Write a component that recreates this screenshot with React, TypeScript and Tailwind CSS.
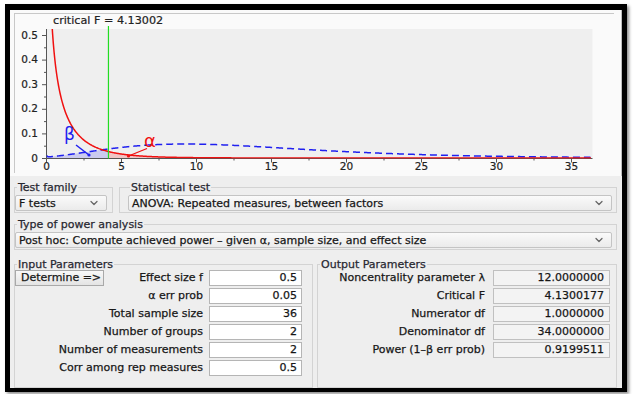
import { ChevronDown } from "lucide-react";
import type { ReactNode } from "react";

// --- density helpers for the chart ---
function lgamma(x: number): number {
  const c = [
    0.99999999999980993, 676.5203681218851, -1259.1392167224028, 771.32342877765313,
    -176.61502916214059, 12.507343278686905, -0.13857109526572012, 9.9843695780195716e-6,
    1.5056327351493116e-7,
  ];
  if (x < 0.5) return Math.log(Math.PI / Math.sin(Math.PI * x)) - lgamma(1 - x);
  x -= 1;
  let a = c[0];
  const t = x + 7.5;
  for (let i = 1; i < 9; i++) a += c[i] / (x + i);
  return 0.5 * Math.log(2 * Math.PI) + (x + 0.5) * Math.log(t) - t + Math.log(a);
}

function fpdf(x: number, d1: number, d2: number) {
  if (x <= 0) return 0;
  const lb = lgamma((d1 + d2) / 2) - lgamma(d1 / 2) - lgamma(d2 / 2);
  return Math.exp(
    lb + (d1 / 2) * Math.log(d1 / d2) + (d1 / 2 - 1) * Math.log(x) - ((d1 + d2) / 2) * Math.log(1 + (d1 * x) / d2)
  );
}

function ncfpdf(x: number, d1: number, d2: number, lam: number) {
  let s = 0;
  for (let k = 0; k < 80; k++) {
    const w = Math.exp(-lam / 2 + k * Math.log(lam / 2) - lgamma(k + 1));
    const dk = d1 + 2 * k;
    s += w * (d1 / dk) * fpdf((d1 * x) / dk, dk, d2);
  }
  return s;
}

const X = (f: number) => 46.5 + f * 15;
const Y = (d: number) => 158 - d * 246;
const CRIT = 4.13002;
const FMAX = 36.3;

function buildPts(fn: (f: number) => number, from: number, to: number, step = 0.05) {
  const pts: string[] = [];
  for (let f = from; f <= to + 1e-9; f += step) {
    pts.push(`${X(f).toFixed(2)},${Y(Math.min(fn(f), 1)).toFixed(2)}`);
  }
  return pts;
}

function Chart() {
  const central = (f: number) => fpdf(f, 1, 34);
  const noncentral = (f: number) => ncfpdf(f, 1, 34, 12);

  const red = buildPts(central, 0.25, FMAX);
  const blue = buildPts(noncentral, 0.01, FMAX);
  const betaFill = buildPts(noncentral, 0.01, CRIT, 0.02);
  const alphaFill = buildPts(central, CRIT, FMAX);

  const yTicks = [0, 0.1, 0.2, 0.3, 0.4, 0.5];
  const yMinor = [0.05, 0.15, 0.25, 0.35, 0.45];
  const xTicks = [0, 5, 10, 15, 20, 25, 30, 35];
  const xMinor = [2.5, 7.5, 12.5, 17.5, 22.5, 27.5, 32.5];

  return (
    <svg width={599} height={159} viewBox="15 14 599 159" className="block">
      <defs>
        <clipPath id="plot">
          <rect x={46.5} y={29} width={546} height={129.5} />
        </clipPath>
      </defs>
      <text x={53} y={23.5} fontSize={11.2} fill="#222" stroke="#222" strokeWidth={0.2}>
        critical F = 4.13002
      </text>
      <rect x={46.5} y={29} width={546} height={129} fill="#efefef" />

      <g clipPath="url(#plot)">
        <polygon points={`${X(0)},${Y(0)} ${betaFill.join(" ")} ${X(CRIT)},${Y(0)}`} fill="rgba(120,120,240,0.3)" />
        <polygon points={`${X(CRIT)},${Y(0)} ${alphaFill.join(" ")} ${X(FMAX)},${Y(0)}`} fill="rgba(240,120,120,0.35)" />
      </g>

      {/* axes */}
      <line x1={46.5} y1={29} x2={46.5} y2={158.5} stroke="#555" />
      <line x1={46.5} y1={158.5} x2={592.5} y2={158.5} stroke="#555" />
      {yTicks.map((t) => (
        <g key={t}>
          <line x1={42} y1={Y(t) + 0.5} x2={46.5} y2={Y(t) + 0.5} stroke="#555" />
          <text x={38} y={Y(t) + 3.5} fontSize={10.5} textAnchor="end" fill="#222" stroke="#222" strokeWidth={0.2}>
            {t === 0 ? "0" : t.toFixed(1)}
          </text>
        </g>
      ))}
      {yMinor.map((t) => (
        <line key={t} x1={44} y1={Y(t) + 0.5} x2={46.5} y2={Y(t) + 0.5} stroke="#555" />
      ))}
      {xTicks.map((t) => (
        <g key={t}>
          <line x1={X(t)} y1={158.5} x2={X(t)} y2={162.5} stroke="#555" />
          <text x={X(t)} y={169.5} fontSize={10.5} textAnchor="middle" fill="#222" stroke="#222" strokeWidth={0.2}>
            {t}
          </text>
        </g>
      ))}
      {xMinor.map((t) => (
        <line key={t} x1={X(t)} y1={158.5} x2={X(t)} y2={160.5} stroke="#555" />
      ))}

      <g clipPath="url(#plot)">
        <polyline points={blue.join(" ")} fill="none" stroke="#2020f0" strokeWidth={1.5} strokeDasharray="7 4" />
        <polyline points={red.join(" ")} fill="none" stroke="#f01010" strokeWidth={1.5} />
      </g>

      <line x1={X(CRIT)} y1={26} x2={X(CRIT)} y2={158.5} stroke="#22dd22" strokeWidth={1.2} />

      {/* beta marker */}
      <text x={64} y={140} fontSize={17} fill="#2020f0">
        β
      </text>
      <line x1={76} y1={145} x2={89} y2={155} stroke="#2020f0" strokeWidth={1.5} />
      <circle cx={89} cy={155} r={1.6} fill="#2020f0" />

      {/* alpha marker */}
      <text x={144} y={147} fontSize={18} fill="#f01010">
        α
      </text>
      <line x1={147} y1={148.5} x2={128.5} y2={156} stroke="#f01010" strokeWidth={1.3} />
      <circle cx={128.5} cy={156} r={1.6} fill="#f01010" />
    </svg>
  );
}

function Combo({ text, className }: { text: string; className?: string }) {
  return (
    <div
      className={`flex items-center justify-between h-[16px] pl-[3px] pr-[6px] border border-[#c4c4c4] rounded-[2px] bg-linear-to-b from-[#fafafa] to-[#ebebeb] text-[11px] text-[#111] ${className ?? ""}`}
    >
      <span className="leading-none whitespace-nowrap">{text}</span>
      <ChevronDown size={12} strokeWidth={2.5} className="text-[#666]" />
    </div>
  );
}

function Group({ title, className, tight, children }: { title: string; className?: string; tight?: boolean; children: ReactNode }) {
  return (
    <fieldset className={`border border-[#d3d3d3] min-w-0 ${className ?? ""}`}>
      <legend className={`ml-[2px] px-[1px] text-[11px] text-[#2a2a3a] ${tight ? "leading-[11px]" : "leading-[13px]"}`}>
        {title}
      </legend>
      {children}
    </fieldset>
  );
}

const inputs: [string, string][] = [
  ["Effect size f", "0.5"],
  ["α err prob", "0.05"],
  ["Total sample size", "36"],
  ["Number of groups", "2"],
  ["Number of measurements", "2"],
  ["Corr among rep measures", "0.5"],
];

const outputs: [string, string][] = [
  ["Noncentrality parameter λ", "12.0000000"],
  ["Critical F", "4.1300177"],
  ["Numerator df", "1.0000000"],
  ["Denominator df", "34.0000000"],
  ["Power (1–β err prob)", "0.9199511"],
];

export default function App() {
  return (
    <div className="w-[633px] h-[394px] bg-white overflow-hidden pt-[4px] pl-[5px] font-['DejaVu_Sans',sans-serif] [-webkit-text-stroke:0.25px_#222]">
      <div className="w-[622px] h-[388px] border-black border-t-[6px] border-l-[5px] border-r-[5px] border-b-[4px] shadow-[2px_2px_3px_rgba(0,0,0,0.45)] bg-[#eeeeee] flex flex-col">
        {/* chart */}
        <div className="h-[166px] bg-[#fafafa] pl-[4px] pt-[3px] border-r border-[#bdbdbd]">
          <div className="w-[600px] h-[160px] border-t border-l border-[#c8c8c8]">
            <Chart />
          </div>
        </div>

        <div className="flex-1 flex flex-col pl-[4px] pr-[5px]">
          <div className="flex gap-[6px] mt-[5px]">
            <Group title="Test family" className="w-[99px] pb-[1px]">
              <Combo text="F tests" className="mt-[1px] w-[92px]" />
            </Group>
            <Group title="Statistical test" className="flex-1 pl-[8px] pr-[4px] pb-[1px]">
              <Combo text="ANOVA: Repeated measures, between factors" className="mt-[1px]" />
            </Group>
          </div>

          <Group title="Type of power analysis" className="mt-[5px] pr-[4px] pb-[1px]">
            <Combo text="Post hoc: Compute achieved power – given α, sample size, and effect size" className="mt-[1px]" />
          </Group>

          <div className="flex-1 flex gap-[4px] mt-[9px]">
            <Group title="Input Parameters" tight className="w-[299px] pr-[10px]">
              <div className="flex flex-col gap-[2px]">
                {inputs.map(([label, value], i) => (
                  <div key={label} className="grid grid-cols-[1fr_93px] gap-x-[6px] h-[16px]">
                    <div className="flex items-center justify-between">
                      {i === 0 ? (
                        <button className="h-[16px] w-[89px] border border-[#a9a9a9] bg-linear-to-b from-[#f8f8f8] to-[#e4e4e4] text-left pl-[5px] text-[11px] leading-[14px] text-[#111]">
                          Determine =&gt;
                        </button>
                      ) : (
                        <span />
                      )}
                      <span className="text-[11px] leading-[16px] text-[#111] whitespace-nowrap">{label}</span>
                    </div>
                    <div className="h-[16px] border border-[#b5b5b5] bg-white text-right pr-[4px] text-[11px] leading-[14px] text-[#111]">
                      {value}
                    </div>
                  </div>
                ))}
              </div>
            </Group>

            <Group title="Output Parameters" tight className="flex-1 pr-[6px]">
              <div className="flex flex-col gap-[2px]">
                {outputs.map(([label, value]) => (
                  <div key={label} className="grid grid-cols-[1fr_117px] gap-x-[8px] h-[16px]">
                    <span className="text-right text-[11px] leading-[16px] text-[#111] whitespace-nowrap">{label}</span>
                    <div className="h-[16px] border border-[#c0c0c0] bg-[#f3f3f3] text-right pr-[5px] text-[11px] leading-[14px] text-[#111]">
                      {value}
                    </div>
                  </div>
                ))}
              </div>
            </Group>
          </div>
        </div>
      </div>
    </div>
  );
}
